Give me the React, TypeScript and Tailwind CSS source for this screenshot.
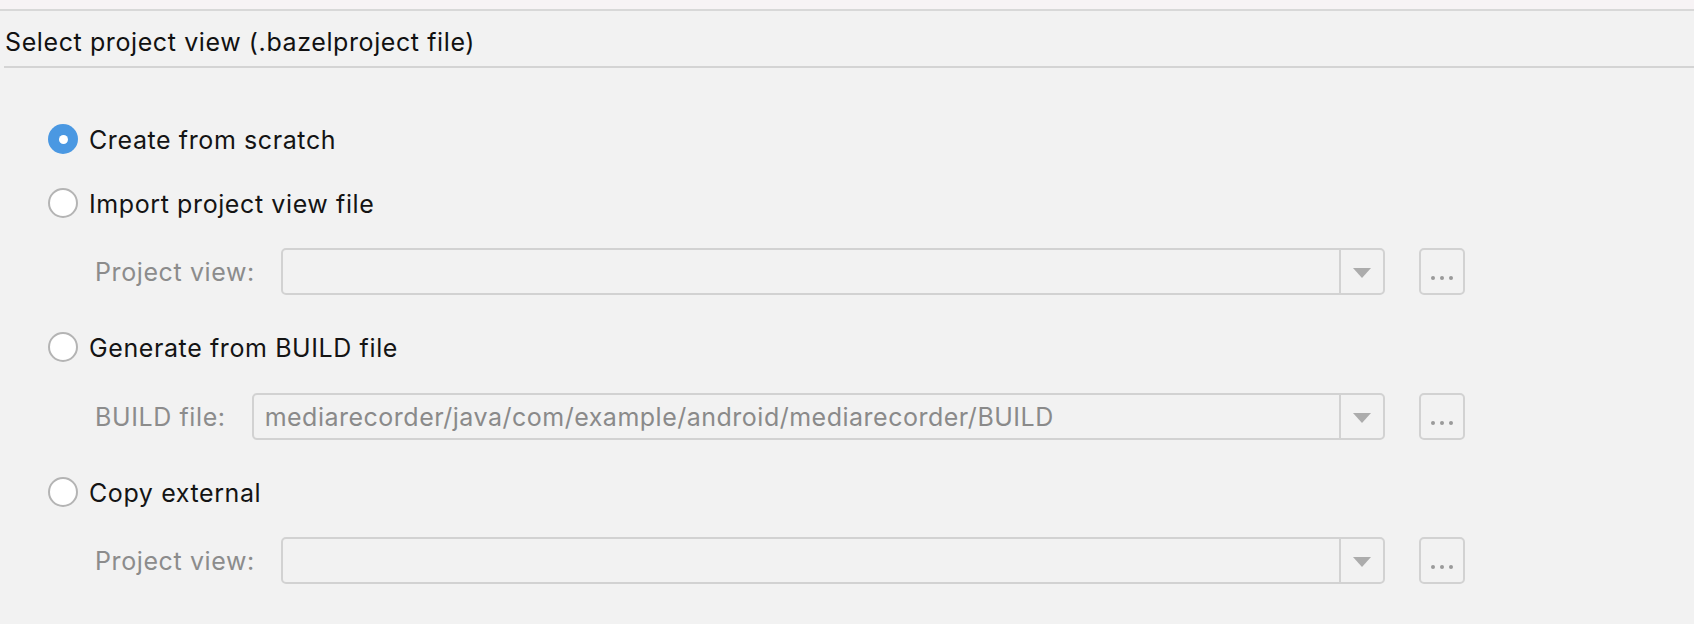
import React from 'react';

const font = { fontFamily: '"Inter", "Noto Sans", sans-serif' };

const Radio = ({ checked, label }: { checked?: boolean; label: string }) => (
    <div className="flex items-center h-[40px]">
        {checked ? (
            <span className="w-[30px] h-[30px] rounded-full bg-[#4a98e2] flex items-center justify-center">
                <span className="w-[9px] h-[9px] rounded-full bg-white" />
            </span>
        ) : (
            <span className="w-[30px] h-[30px] rounded-full bg-white border-2 border-[#b4b4b4]" />
        )}
        <span className="ml-[11px] pt-[3px] text-[25px] tracking-[0.6px] text-[#141414]">{label}</span>
    </div>
);

const ComboRow = ({ label, value, className }: { label: string; value?: string; className?: string }) => (
    <div className={`flex items-center pl-[47px] pr-[229px] ${className ?? ''}`}>
        <span className="pt-[3px] text-[25px] tracking-[0.6px] text-[#8c8c8c] mr-[26px] whitespace-nowrap">{label}</span>
        <div className="flex-1 h-[47px] flex border-2 border-[#d2d2d2] rounded-[5px]">
            <div className="flex-1 flex items-center pt-[3px] pl-[11px] text-[25px] tracking-[0.5px] text-[#8a8a8a] whitespace-nowrap overflow-hidden">
                {value}
            </div>
            <div className="w-[44px] border-l-2 border-[#d2d2d2] flex items-center justify-center pt-[2px]">
                <svg width="18" height="10" viewBox="0 0 18 10">
                    <path d="M0 0 L18 0 L9 10 Z" fill="#acacac" />
                </svg>
            </div>
        </div>
        <div className="ml-[34px] w-[46px] h-[47px] border-2 border-[#d2d2d2] rounded-[5px] flex items-end justify-center gap-[5px] pb-[13px]">
            <span className="w-[4px] h-[4px] rounded-full bg-[#9a9a9a]" />
            <span className="w-[4px] h-[4px] rounded-full bg-[#9a9a9a]" />
            <span className="w-[4px] h-[4px] rounded-full bg-[#9a9a9a]" />
        </div>
    </div>
);

export default function App() {
    return (
        <div className="w-full h-[624px] bg-[#f2f2f2] overflow-hidden" style={font}>
            <div className="h-[9px] bg-[#f7f3f5] border-b-2 border-[#d8d8d8] box-content" />
            <div className="h-[55px] flex items-center pt-[8px] pl-[5px] text-[25px] tracking-[0.6px] text-[#111]">
                Select project view (.bazelproject file)
            </div>
            <div className="ml-[4px] h-[2px] bg-[#d4d4d4]" />

            <div className="pl-[48px] flex flex-col">
                <div className="mt-[51px]">
                    <Radio checked label="Create from scratch" />
                </div>
                <div className="mt-[24px]">
                    <Radio label="Import project view file" />
                </div>
                <ComboRow className="mt-[25px]" label="Project view:" />
                <div className="mt-[32px]">
                    <Radio label="Generate from BUILD file" />
                </div>
                <ComboRow
                    className="mt-[26px]"
                    label="BUILD file:"
                    value="mediarecorder/java/com/example/android/mediarecorder/BUILD"
                />
                <div className="mt-[32px]">
                    <Radio label="Copy external" />
                </div>
                <ComboRow className="mt-[25px]" label="Project view:" />
            </div>
        </div>
    );
}
